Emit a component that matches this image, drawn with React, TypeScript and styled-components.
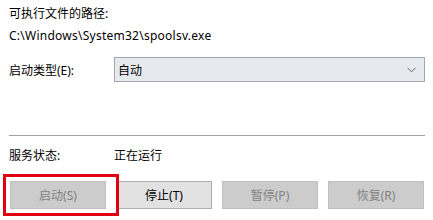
import React from "react";
import styled, { createGlobalStyle } from "styled-components";

const Global = createGlobalStyle`
  html, body { margin: 0; padding: 0; background: #ffffff; }
  body { font-family: "Noto Sans", "Noto Sans CJK SC", sans-serif; font-size: 12px; color: #000; }
`;

const Page = styled.div`
  width: 433px;
  height: 220px;
  box-sizing: border-box;
  padding: 5px 8px 0 9px;
  display: flex;
  flex-direction: column;
  overflow: hidden;
`;

const Line = styled.div<{ $mt?: number; $spacing?: number }>`
  height: 17px;
  line-height: 17px;
  margin-top: ${(p) => p.$mt ?? 0}px;
  letter-spacing: ${(p) => p.$spacing ?? 0}px;
  white-space: nowrap;
`;

const Row = styled.div<{ $mt?: number }>`
  display: flex;
  align-items: center;
  margin-top: ${(p) => p.$mt ?? 0}px;
`;

const Label = styled.div`
  width: 105px;
  white-space: nowrap;
`;

const Combo = styled.div`
  width: 311px;
  height: 25px;
  box-sizing: border-box;
  border: 1px solid #9ea8b2;
  background: #e6eaee;
  display: flex;
  align-items: center;
  justify-content: space-between;
  padding: 0 8px 0 3px;
`;

const Separator = styled.div`
  height: 1px;
  background: #a0a0a0;
  margin-top: 53px;
  width: 416px;
`;

const Buttons = styled.div`
  display: flex;
  gap: 10px;
  margin-top: 17px;
  margin-left: 1px;
`;

const Highlight = styled.div`
  position: relative;
  display: flex;
`;

const Frame = styled.div`
  position: absolute;
  left: -7px;
  top: -7px;
  width: 116px;
  height: 42px;
  box-sizing: border-box;
  border: 3px solid #e00010;
  pointer-events: none;
`;

const Button = styled.div<{ $disabled?: boolean }>`
  width: 96px;
  height: 28px;
  box-sizing: border-box;
  display: flex;
  align-items: center;
  justify-content: center;
  background: ${(p) => (p.$disabled ? "#cccccc" : "#e1e1e1")};
  border: 1px solid ${(p) => (p.$disabled ? "#bfbfbf" : "#adadad")};
  color: ${(p) => (p.$disabled ? "#838383" : "#000000")};
`;

export default function App() {
  return (
    <>
      <Global />
      <Page>
        <Line>可执行文件的路径:</Line>
        <Line $mt={5} $spacing={0.25}>C:\Windows\System32\spoolsv.exe</Line>
        <Row $mt={13}>
          <Label>启动类型(E):</Label>
          <Combo>
            <span>自动</span>
            <svg width="9" height="6" viewBox="0 0 9 6">
              <path d="M0.5 0.8 L4.5 4.8 L8.5 0.8" fill="none" stroke="#606060" strokeWidth="1" />
            </svg>
          </Combo>
        </Row>
        <Separator />
        <Row $mt={10}>
          <Label>服务状态:</Label>
          <span>正在运行</span>
        </Row>
        <Buttons>
          <Highlight>
            <Button $disabled>启动(S)</Button>
            <Frame />
          </Highlight>
          <Button>停止(T)</Button>
          <Button $disabled>暂停(P)</Button>
          <Button $disabled>恢复(R)</Button>
        </Buttons>
      </Page>
    </>
  );
}
